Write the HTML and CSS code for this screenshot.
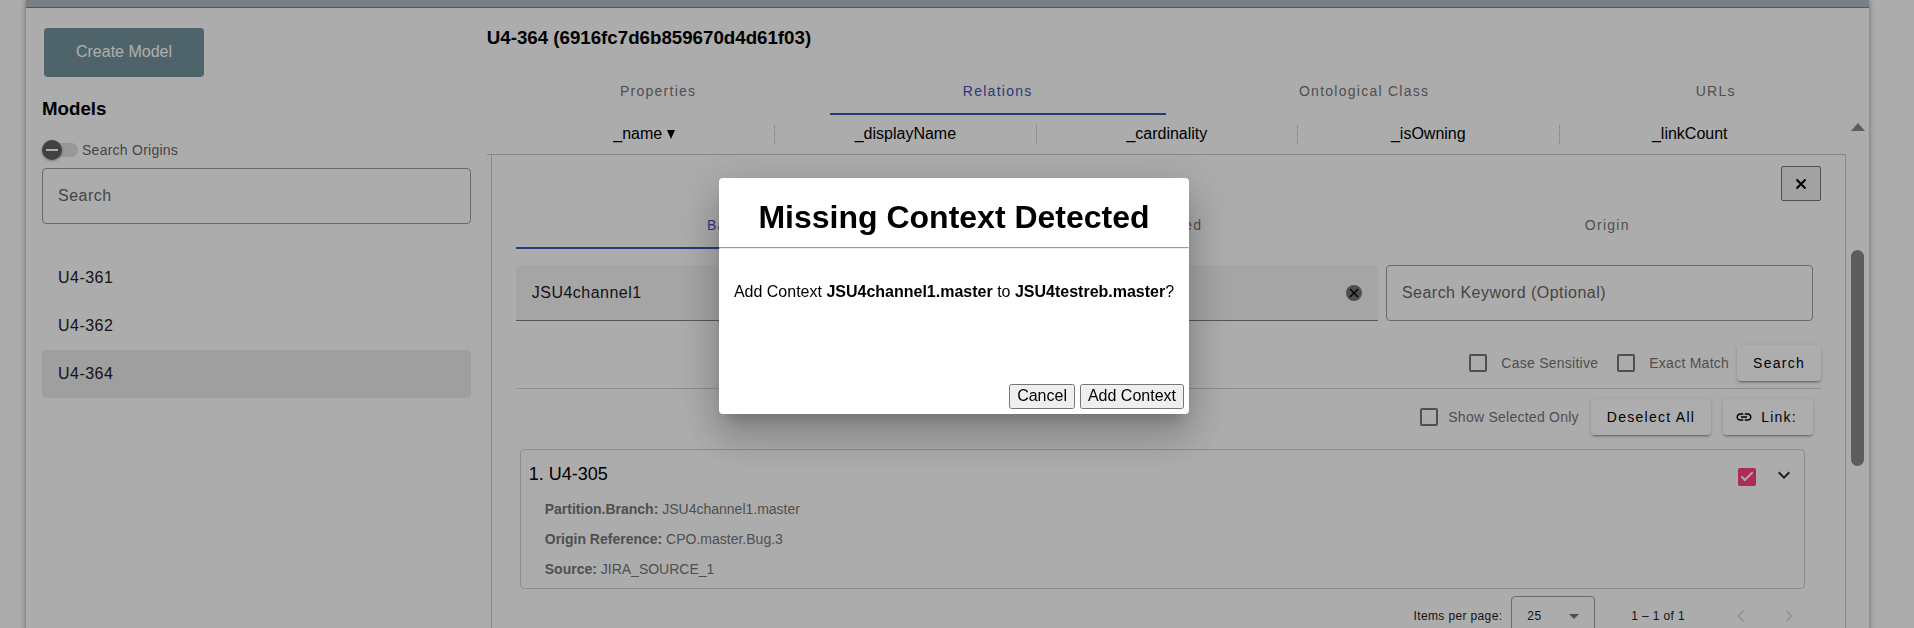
FILE: index.html
```
<!DOCTYPE html>
<html lang="en">
  <head>
    <meta charset="UTF-8" />
    <meta name="viewport" content="width=device-width, initial-scale=1.0" />
    <title>Models</title>
    <link rel="stylesheet" href="styles.css" />
  </head>
  <body>
    <div class="app">
      <header class="topbar"></header>
      <div class="layout">
        <aside class="sidebar">
          <button type="button" class="create-btn">Create Model</button>
          <h3>Models</h3>
          <div class="toggle-row">
            <input type="checkbox" role="switch" class="toggle" id="origins" />
            <label for="origins">Search Origins</label>
          </div>
          <input type="text" class="field outlined" placeholder="Search" aria-label="Search models" />
          <ul class="model-list">
            <li><a href="#">U4-361</a></li>
            <li><a href="#">U4-362</a></li>
            <li><a href="#" class="selected">U4-364</a></li>
          </ul>
        </aside>

        <main class="content">
          <h3>U4-364 (6916fc7d6b859670d4d61f03)</h3>
          <nav class="tabs">
            <button type="button">Properties</button>
            <button type="button" class="active">Relations</button>
            <button type="button">Ontological Class</button>
            <button type="button">URLs</button>
          </nav>

          <div class="scroller">
            <div class="scroll-body">
              <div class="table-head">
                <table>
                  <thead>
                    <tr>
                      <th>
                        <span>_name
                          <svg width="8" height="9" viewBox="0 0 8 9"><path d="M0 0h8L4 9z" /></svg>
                        </span>
                      </th>
                      <th><span>_displayName</span></th>
                      <th><span>_cardinality</span></th>
                      <th><span>_isOwning</span></th>
                      <th><span>_linkCount</span></th>
                    </tr>
                  </thead>
                </table>
              </div>

              <section class="panel">
                <div class="close-row">
                  <button type="button" class="close" aria-label="Close">
                    <svg width="12" height="12" viewBox="0 0 12 12"><path d="M1.5 1.5l9 9M10.5 1.5l-9 9" /></svg>
                  </button>
                </div>
                <nav class="tabs">
                  <button type="button" class="active">Basic</button>
                  <button type="button">Advanced</button>
                  <button type="button">Origin</button>
                </nav>

                <form class="search-form">
                  <div class="fields">
                    <div class="field filled">
                      <input type="text" value="JSU4channel1" aria-label="Branch" />
                      <button type="button" class="clear" aria-label="Clear">
                        <svg width="16" height="16" viewBox="0 0 16 16">
                          <circle cx="8" cy="8" r="8" />
                          <path d="M4 4l8 8M12 4l-8 8" />
                        </svg>
                      </button>
                    </div>
                    <input type="text" class="field outlined" placeholder="Search Keyword (Optional)" aria-label="Search keyword" />
                  </div>
                  <div class="options">
                    <label class="check spaced"><input type="checkbox" />Case Sensitive</label>
                    <label class="check spaced"><input type="checkbox" />Exact Match</label>
                    <button type="button" class="raised">Search</button>
                  </div>
                </form>

                <div class="actions">
                  <label class="check"><input type="checkbox" />Show Selected Only</label>
                  <button type="button" class="raised">Deselect All</button>
                  <button type="button" class="raised with-icon">
                    <svg width="18" height="18" viewBox="0 0 24 24"><path d="M3.9 12c0-1.71 1.39-3.1 3.1-3.1h4V7H7c-2.76 0-5 2.24-5 5s2.24 5 5 5h4v-1.9H7c-1.71 0-3.1-1.39-3.1-3.1zM8 13h8v-2H8v2zm9-6h-4v1.9h4c1.71 0 3.1 1.39 3.1 3.1s-1.39 3.1-3.1 3.1h-4V17h4c2.76 0 5-2.24 5-5s-2.24-5-5-5z" /></svg>
                    Link:
                  </button>
                </div>

                <article class="card">
                  <div class="card-text">
                    <h4>1. U4-305</h4>
                    <p><b>Partition.Branch:</b> JSU4channel1.master</p>
                    <p><b>Origin Reference:</b> CPO.master.Bug.3</p>
                    <p><b>Source:</b> JIRA_SOURCE_1</p>
                  </div>
                  <div class="card-tools">
                    <label class="check"><input type="checkbox" checked aria-label="Select U4-305" /></label>
                    <button type="button" class="icon-btn" aria-label="Expand">
                      <svg width="24" height="24" viewBox="0 0 24 24"><path d="M7.41 8.59L12 13.17l4.59-4.58L18 10l-6 6-6-6z" /></svg>
                    </button>
                  </div>
                </article>

                <div class="paginator">
                  <label for="page-size">Items per page:</label>
                  <div class="select-box">
                    <select id="page-size">
                      <option>25</option>
                      <option>50</option>
                      <option>100</option>
                    </select>
                    <svg width="10" height="5" viewBox="0 0 10 5"><path d="M0 0h10L5 5z" /></svg>
                  </div>
                  <span class="range">1 – 1 of 1</span>
                  <button type="button" class="icon-btn" disabled aria-label="Previous page">
                    <svg width="24" height="24" viewBox="0 0 24 24"><path d="M15.41 7.41L14 6l-6 6 6 6 1.41-1.41L10.83 12z" /></svg>
                  </button>
                  <button type="button" class="icon-btn" disabled aria-label="Next page">
                    <svg width="24" height="24" viewBox="0 0 24 24"><path d="M10 6L8.59 7.41 13.17 12l-4.58 4.59L10 18l6-6z" /></svg>
                  </button>
                </div>
              </section>
            </div>
            <div class="scrollbar">
              <svg width="14" height="8" viewBox="0 0 14 8"><path d="M7 0l7 8H0z" /></svg>
              <div class="thumb"></div>
            </div>
          </div>
        </main>
      </div>
    </div>

    <div class="backdrop">
      <dialog open class="modal" aria-labelledby="modal-title">
        <h1 id="modal-title">Missing Context Detected</h1>
        <hr />
        <p>Add Context <b>JSU4channel1.master</b> to <b>JSU4testreb.master</b>?</p>
        <div class="modal-buttons">
          <button type="button">Cancel</button>
          <button type="button">Add Context</button>
        </div>
      </dialog>
    </div>
  </body>
</html>
```
FILE: styles.css
```
* {
  box-sizing: border-box;
}
body {
  margin: 0;
  height: 100vh;
  overflow: hidden;
  background: #fefefe;
  color: #000;
  font-family: Arial, "Liberation Sans", sans-serif;
  font-size: 16px;
}
button,
input,
select {
  font-family: inherit;
}
svg {
  display: block;
}
h3 {
  margin: 0;
  line-height: 22px;
}

.app {
  margin: 0 45px 0 26px;
  min-height: 100vh;
  box-shadow: 0 0 6px rgba(0, 0, 0, 0.4);
}
.topbar {
  height: 8px;
  background: #b2bcc7;
  border-bottom: 1px solid #76838c;
}
.layout {
  display: grid;
  grid-template-columns: 25% 1fr;
}

/* sidebar */
.sidebar {
  padding: 20px 16px;
}
.create-btn {
  display: block;
  width: 160px;
  height: 49px;
  margin: 0 2px 21px;
  padding: 0 0 2px;
  border: none;
  border-radius: 4px;
  background: #74939d;
  color: #fff;
  font-size: 16px;
}
.toggle-row {
  display: flex;
  align-items: center;
  gap: 4px;
  height: 36px;
  margin-top: 12px;
  color: #666;
  font-size: 14px;
  letter-spacing: 0.018em;
}
.toggle {
  appearance: none;
  position: relative;
  width: 36px;
  height: 14px;
  margin: 0;
  border-radius: 7px;
  background: #e0e0e0;
}
.toggle::before {
  content: "";
  position: absolute;
  top: -3px;
  left: 0;
  width: 20px;
  height: 20px;
  border-radius: 50%;
  background: #616161;
  box-shadow: 0 1px 3px rgba(0, 0, 0, 0.3);
}
.toggle::after {
  content: "";
  position: absolute;
  top: 6px;
  left: 4px;
  width: 12px;
  height: 2px;
  background: #fff;
}
.field {
  height: 56px;
  padding: 0 15px;
  font-size: 16px;
  letter-spacing: 0.03em;
}
.outlined {
  width: 100%;
  border: 1px solid #9e9e9e;
  border-radius: 4px;
  background: transparent;
}
.field::placeholder {
  color: #666;
}
.model-list {
  margin: 30px 0 0;
  padding: 0;
  list-style: none;
}
.model-list a {
  display: block;
  padding: 0 16px;
  border-radius: 4px;
  color: #212121;
  line-height: 48px;
  letter-spacing: 0.03em;
  text-decoration: none;
}
.model-list .selected {
  background: #ebebeb;
}

/* content */
.content {
  padding-top: 19px;
  min-width: 0;
}
.content > .tabs {
  margin-top: 18px;
}
.tabs {
  display: flex;
}
.tabs button {
  flex: 1 0 auto;
  height: 48px;
  padding: 2px 24px 0;
  border: none;
  border-bottom: 2px solid transparent;
  background: none;
  color: #757575;
  font-size: 14px;
  letter-spacing: 0.09em;
}
.tabs .active {
  border-color: #3f51b5;
  color: #3f51b5;
}
.scroller {
  display: grid;
  grid-template-columns: 1fr 23px;
}
.table-head {
  padding: 10px 25px 10px 27px;
  border-bottom: 1px solid #c8c8c8;
}
.table-head table {
  width: 100%;
  table-layout: fixed;
  border-collapse: collapse;
}
.table-head th {
  padding: 0;
  font-weight: normal;
}
.table-head span {
  display: block;
  padding-bottom: 2px;
  line-height: 17px;
  border-right: 1px dotted #b0b0b0;
}
.table-head th:last-child span {
  border-color: transparent;
}
.table-head svg {
  display: inline-block;
}
.scrollbar {
  display: flex;
  flex-direction: column;
  align-items: center;
  padding-top: 8px;
  fill: #8a8a8a;
}
.thumb {
  width: 13px;
  height: 216px;
  margin-top: 119px;
  border-radius: 7px;
  background: #8a8a8a;
}

/* relation panel */
.panel {
  margin-left: 4px;
  padding: 11px 24px;
  border: solid #ccc;
  border-width: 0 1px;
}
.close-row {
  display: flex;
  justify-content: flex-end;
}
.close {
  display: grid;
  place-items: center;
  width: 40px;
  height: 35px;
  border: 1px solid #767676;
  border-radius: 2px;
  background: #efefef;
}
.close path {
  stroke: #000;
  stroke-width: 2;
}
.search-form {
  border-bottom: 1px solid #d3d3d3;
}
.fields {
  display: flex;
  gap: 8px;
  padding: 16px 8px 24px 0;
}
.fields .outlined {
  flex: 1;
}
.filled {
  flex: none;
  width: calc(66% + 6px);
  display: flex;
  align-items: center;
  padding: 0 16px;
  border-bottom: 1px solid #808080;
  border-radius: 4px 4px 0 0;
  background: #f4f4f4;
}
.filled input {
  flex: 1;
  padding: 0;
  border: none;
  background: none;
  color: #212121;
  font-size: 16px;
  letter-spacing: 0.03em;
}
.clear {
  padding: 0;
  border: none;
  background: none;
  fill: #757575;
}
.clear path {
  stroke: #000;
  stroke-width: 1.4;
}
.options {
  display: flex;
  justify-content: flex-end;
  align-items: center;
  gap: 8px;
  height: 36px;
  margin-bottom: 7px;
}
.check {
  display: flex;
  align-items: center;
  color: #757575;
  font-size: 14px;
  letter-spacing: 0.018em;
}
.check input {
  appearance: none;
  position: relative;
  width: 18px;
  height: 18px;
  margin: 11px;
  margin-right: 10px;
  border: 2px solid #757575;
  border-radius: 2px;
}
.check.spaced input {
  margin-right: 14px;
}
.check input:checked {
  border-color: #ff4081;
  background: #ff4081;
}
.check input:checked::after {
  content: "";
  position: absolute;
  top: -1px;
  left: 4px;
  width: 4px;
  height: 10px;
  border: solid #fff;
  border-width: 0 2px 2px 0;
  transform: rotate(45deg);
}
.raised {
  display: flex;
  align-items: center;
  height: 36px;
  padding: 0 16px;
  border: none;
  border-radius: 4px;
  background: #fff;
  color: #000;
  font-size: 14px;
  letter-spacing: 0.09em;
  box-shadow: 0 3px 1px -2px rgba(0, 0, 0, 0.2),
    0 2px 2px rgba(0, 0, 0, 0.14), 0 1px 5px rgba(0, 0, 0, 0.12);
}
.with-icon {
  gap: 8px;
  padding-left: 12px;
}
.actions {
  display: flex;
  justify-content: flex-end;
  align-items: center;
  gap: 12px;
  height: 36px;
  margin: 10px 8px 14px 0;
}
.card {
  display: flex;
  justify-content: space-between;
  margin: 0 16px 7px 4px;
  padding: 6px 8px 4px;
  border: 1px solid #d0d0d0;
  border-radius: 4px;
}
.card h4 {
  margin: 0 0 2px;
  font-size: 18px;
  font-weight: normal;
  line-height: 36px;
}
.card p {
  margin: 0 0 0 16px;
  color: #757575;
  font-size: 14px;
  line-height: 30px;
}
.card-tools {
  display: flex;
  align-items: flex-start;
}
.card-tools .check {
  margin-top: 1px;
}
.card-tools .icon-btn {
  width: 24px;
  height: 38px;
  margin-left: 6px;
}
.icon-btn {
  display: grid;
  place-items: center;
  width: 48px;
  height: 40px;
  padding: 0;
  border: none;
  background: none;
  fill: #263238;
}
.icon-btn:disabled {
  fill: #dcdcdc;
}
.paginator {
  display: flex;
  justify-content: flex-end;
  align-items: center;
  margin-right: 8px;
  color: #212121;
  font-size: 12px;
  letter-spacing: 0.03em;
}
.select-box {
  position: relative;
  margin: 0 36px 0 9px;
}
.select-box select {
  appearance: none;
  width: 84px;
  height: 40px;
  padding: 0 15px;
  border: 1px solid #9e9e9e;
  border-radius: 4px;
  background: transparent;
  color: #212121;
  font-size: 12px;
  letter-spacing: 0.03em;
}
.select-box svg {
  position: absolute;
  top: 18px;
  right: 16px;
  fill: #757575;
  pointer-events: none;
}
.range {
  margin-right: 32px;
}

/* dialog */
.backdrop {
  position: fixed;
  inset: 0;
  display: flex;
  align-items: center;
  justify-content: center;
  padding: 0 6px 36px 0;
  background: rgba(0, 0, 0, 0.32);
}
.modal {
  position: static;
  display: flex;
  flex-direction: column;
  width: 470px;
  min-height: 236px;
  margin: 0;
  padding: 0 0 5px;
  border: none;
  border-radius: 4px;
  background: #fff;
  text-align: center;
  box-shadow: 0 11px 15px -7px rgba(0, 0, 0, 0.2),
    0 24px 38px 3px rgba(0, 0, 0, 0.14), 0 9px 46px 8px rgba(0, 0, 0, 0.12);
}
.modal h1 {
  margin: 21px 0 12px;
  font-size: 32px;
  line-height: 36px;
}
.modal hr {
  width: 100%;
  margin: 0;
}
.modal p {
  margin: 33px 0;
  line-height: 20px;
}
.modal-buttons {
  display: flex;
  justify-content: flex-end;
  gap: 5px;
  margin-top: auto;
  padding-right: 5px;
}
.modal-buttons button {
  padding: 1px 6px 2px;
  font-size: 16px;
}
```
